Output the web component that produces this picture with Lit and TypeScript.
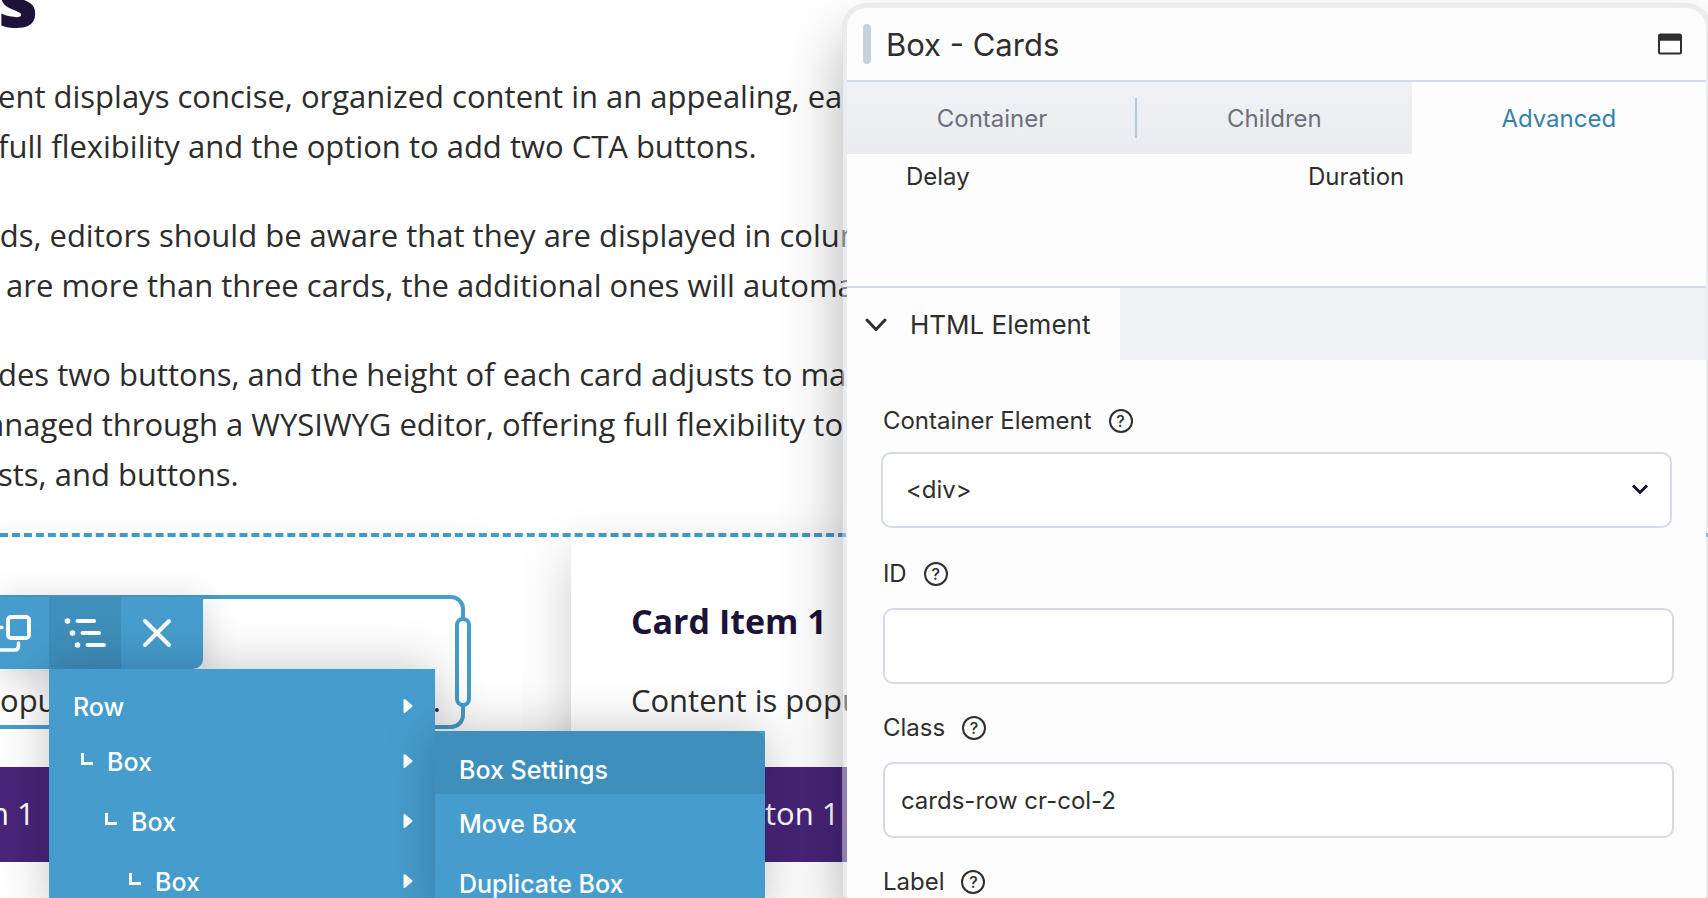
import { LitElement, html, css } from "lit";
import { customElement, state } from "lit/decorators.js";
import { classMap } from "lit/directives/class-map.js";

interface Line {
  text: string;
  cut?: boolean;
}

const PARAGRAPHS: Line[][] = [
  [
    { text: "ent displays concise, organized content in an appealing, ea" },
    { text: "full flexibility and the option to add two CTA buttons." },
  ],
  [
    { text: "rds, editors should be aware that they are displayed in colum", cut: true },
    { text: " are more than three cards, the additional ones will automa" },
  ],
  [
    { text: "des two buttons, and the height of each card adjusts to ma" },
    { text: "anaged through a WYSIWYG editor, offering full flexibility to", cut: true },
    { text: "sts, and buttons." },
  ],
];

const OUTLINE = [
  { label: "Row", depth: 0 },
  { label: "Box", depth: 1 },
  { label: "Box", depth: 2 },
  { label: "Box", depth: 3 },
];

const ACTIONS = ["Box Settings", "Move Box", "Duplicate Box"];

/* Toolbar attached to the selected box, with its outline menu and submenu. */
@customElement("box-toolbar")
export class BoxToolbar extends LitElement {
  static styles = css`
    :host {
      display: block;
      font-family: Inter, "Liberation Sans", sans-serif;
      --blue: #469dcd;
      --blue-dark: #3e8fbb;
    }
    button {
      border: 0;
      margin: 0;
      padding: 0;
      background: transparent;
      color: #fff;
      font: inherit;
    }
    svg {
      display: block;
      fill: none;
      stroke: #fff;
      stroke-linecap: round;
      stroke-linejoin: round;
    }
    .bar {
      display: flex;
      width: max-content;
      height: 72px;
      background: var(--blue);
      border-bottom-right-radius: 10px;
      box-shadow: 0 6px 36px rgba(0, 0, 20, 0.2);
    }
    .copy {
      width: 49px;
    }
    .tree {
      width: 72px;
      background: var(--blue-dark);
    }
    .close {
      width: 82px;
    }
    .menu,
    .submenu {
      position: absolute;
      background: var(--blue);
      font-size: 25px;
      font-weight: 500;
      line-height: 32px;
      box-shadow: 0 0 48px rgba(0, 0, 20, 0.24);
    }
    .menu {
      left: 49px;
      top: 72px;
      width: 386px;
    }
    .submenu {
      left: 386px;
      top: 62px;
      width: 330px;
    }
    .item {
      box-sizing: border-box;
      display: flex;
      align-items: center;
      width: 100%;
      height: 60px;
      padding: 0 22px 0 24px;
      text-align: left;
    }
    .item:first-child {
      height: 63px;
      padding-top: 12px;
    }
    .submenu .item:first-child {
      padding-top: 14px;
      background: var(--blue-dark);
      border-top-right-radius: 10px;
    }
    .depth-1 {
      padding-left: 32px;
    }
    .depth-2 {
      padding-left: 56px;
    }
    .depth-3 {
      padding-left: 80px;
    }
    .branch {
      margin: 0 14px 6px 0;
      stroke-linecap: butt;
      stroke-linejoin: miter;
    }
    .label {
      flex: 1;
    }
    .arrow {
      fill: #fff;
      margin-bottom: 2px;
    }
  `;

  render() {
    return html`
      <div class="bar">
        <button class="copy" aria-label="Duplicate">
          <svg width="49" height="72" viewBox="0 0 49 72" stroke-width="4">
            <rect x="8" y="20" width="21" height="21" rx="3" />
            <path d="M-4 30.500H2M18.500 46v3q0 4-4 4H-4" stroke-width="3.500" />
          </svg>
        </button>
        <button class="tree" aria-label="Outline">
          <svg width="72" height="72" viewBox="0 0 72 72" stroke-width="4">
            <path d="M28.500 24h16.500M33.500 36h16.500M38.500 48h16.500" />
            <g fill="#fff" stroke="none">
              <circle cx="18.500" cy="24" r="2.800" />
              <circle cx="23.500" cy="36" r="2.800" />
              <circle cx="28.500" cy="48" r="2.800" />
            </g>
          </svg>
        </button>
        <button class="close" aria-label="Close">
          <svg width="82" height="72" viewBox="0 0 82 72" stroke-width="4">
            <path d="M24 24l24 24M48 24L24 48" />
          </svg>
        </button>
      </div>
      <div class="menu">
        ${OUTLINE.map(
          (o) => html`<button class="item depth-${o.depth}">
            ${o.depth
              ? html`<svg class="branch" width="12" height="12" viewBox="0 0 12 12" stroke-width="3">
                  <path d="M1.500 0v10.500H12" />
                </svg>`
              : null}
            <span class="label">${o.label}</span>
            <svg class="arrow" width="10" height="16" viewBox="0 0 10 16" stroke-width="2">
              <path d="M1.500 2l7 6-7 6z" />
            </svg>
          </button>`
        )}
        <div class="submenu">
          ${ACTIONS.map((a) => html`<button class="item"><span class="label">${a}</span></button>`)}
        </div>
      </div>
    `;
  }
}

/* Floating settings panel. */
@customElement("settings-panel")
export class SettingsPanel extends LitElement {
  @state() private tab = "Advanced";

  static styles = css`
    :host {
      display: block;
      box-sizing: border-box;
      border: 5px solid rgba(216, 218, 224, 0.5);
      border-bottom: 0;
      border-radius: 25px 25px 0 0;
      background: #fdfdfe;
      background-clip: padding-box;
      box-shadow: 0 34px 60px rgba(0, 0, 10, 0.3);
      color: #2e2e2e;
      font: 24px/30px Inter, "Liberation Sans", sans-serif;
      overflow: hidden;
    }
    button {
      border: 0;
      margin: 0;
      padding: 0;
      background: transparent;
      color: inherit;
      font: inherit;
    }
    svg {
      display: block;
      fill: none;
      stroke: currentColor;
    }
    .head {
      display: flex;
      align-items: center;
      height: 72px;
      padding: 0 24px 0 16px;
      border-bottom: 2px solid #d3dce6;
    }
    .grip {
      width: 8px;
      height: 40px;
      border-radius: 4px;
      background: #c6d1da;
    }
    h2 {
      flex: 1;
      margin: 2px 0 0 15px;
      font-size: 31px;
      line-height: 40px;
      font-weight: 400;
    }
    .tabs {
      display: flex;
      height: 72px;
      background: linear-gradient(#f0f1f5, #ebecf0);
    }
    .tab {
      position: relative;
      flex: 1 1 auto;
      padding-top: 2px;
      color: #6c7079;
    }
    .tab:first-child::after {
      content: "";
      position: absolute;
      right: 0;
      top: 16px;
      width: 2px;
      height: 40px;
      background: #b5c9d8;
    }
    .tab.active {
      background: #fdfdfe;
      color: #3681ab;
    }
    .timing {
      display: grid;
      grid-template-columns: 1fr 1fr;
      column-gap: 4px;
      height: 124px;
      padding: 8px 0 0 59px;
      border-bottom: 2px solid #d3dce6;
    }
    .section {
      display: flex;
      height: 72px;
      background: #eff0f4;
    }
    .section button {
      display: flex;
      align-items: center;
      gap: 23px;
      padding: 2px 30px 0 18px;
      background: #fdfdfe;
      font-size: 26px;
    }
    .fields {
      padding: 46px 32px 0 34px;
    }
    .row {
      display: flex;
      align-items: center;
      gap: 17px;
      padding-left: 2px;
    }
    .help {
      box-sizing: border-box;
      width: 24px;
      height: 24px;
      border: 2px solid #2e2e2e;
      border-radius: 50%;
      font-size: 16px;
      line-height: 20px;
      font-weight: 500;
      text-align: center;
    }
    .control {
      position: relative;
      margin: 19px 0 29px 2px;
    }
    .control.pick {
      margin: 16px 2px 31px 0;
    }
    input,
    select {
      display: block;
      box-sizing: border-box;
      width: 100%;
      height: 76px;
      margin: 0;
      padding: 0 16px;
      appearance: none;
      border: 2px solid #d3dce6;
      border-radius: 10px;
      background: #fff;
      color: inherit;
      font: inherit;
      outline: 0;
    }
    select {
      padding: 0 23px;
    }
    .caret {
      position: absolute;
      right: 23px;
      top: 32px;
      color: #1d1238;
      pointer-events: none;
    }
  `;

  private label(id: string, text: string) {
    return html`<div class="row">
      <label for=${id}>${text}</label>
      <button class="help" type="button" aria-label="Help for ${text}">?</button>
    </div>`;
  }

  render() {
    return html`
      <header class="head">
        <span class="grip"></span>
        <h2>Box - Cards</h2>
        <button aria-label="Window mode">
          <svg width="24" height="22" viewBox="0 0 24 22" stroke-width="2">
            <rect x="1" y="1.500" width="22" height="19" rx="1.500" />
            <path d="M1 4.500h22" stroke-width="6.500" />
          </svg>
        </button>
      </header>
      <nav class="tabs" role="tablist">
        ${["Container", "Children", "Advanced"].map(
          (t) => html`<button
            role="tab"
            class=${classMap({ tab: true, active: t === this.tab })}
            aria-selected=${t === this.tab}
            @click=${() => (this.tab = t)}
          >
            ${t}
          </button>`
        )}
      </nav>
      <div class="timing"><span>Delay</span><span>Duration</span></div>
      <div class="section">
        <button aria-expanded="true">
          <svg width="22" height="14" viewBox="0 0 22 14" stroke-width="3" stroke-linecap="round" stroke-linejoin="round">
            <path d="M2 2l9 9.500 9-9.500" />
          </svg>
          HTML Element
        </button>
      </div>
      <form class="fields">
        ${this.label("element", "Container Element")}
        <div class="control pick">
          <select id="element"><option>&lt;div&gt;</option></select>
          <svg class="caret" width="18" height="12" viewBox="0 0 18 12" stroke-width="3">
            <path d="M2 1.500l7 7 7-7" />
          </svg>
        </div>
        ${this.label("id", "ID")}
        <div class="control"><input id="id" type="text" /></div>
        ${this.label("class", "Class")}
        <div class="control"><input id="class" type="text" value="cards-row cr-col-2" /></div>
        ${this.label("label", "Label")}
      </form>
    `;
  }
}

@customElement("app-root")
export class AppRoot extends LitElement {
  static styles = css`
    :host {
      display: block;
      position: relative;
      height: 100vh;
      overflow: hidden;
      background: #fff;
      color: #2c2c2c;
      font: 31px/50px "Open Sans", "Noto Sans", sans-serif;
    }
    .page {
      margin-top: -43px;
    }
    h1 {
      margin: 0 0 34px -2px;
      color: #1d1238;
      font-size: 78px;
      line-height: 80px;
      font-weight: 800;
    }
    p {
      margin: 0 0 39px;
    }
    .copy p:last-child {
      margin-bottom: 34px;
    }
    .line {
      display: block;
      margin-left: -2px;
      white-space: pre;
    }
    .line.cut {
      margin-left: -13px;
    }
    .cards {
      display: grid;
      grid-template-columns: 63fr 137fr;
      column-gap: 48px;
      border-top: 4px dashed #469dcd;
    }
    .card {
      position: relative;
      background: #fff;
      box-shadow: 0 16px 48px rgba(0, 0, 10, 0.2);
    }
    .card.first {
      z-index: 1;
      padding: 58px 58px 60px 0;
      box-shadow: -30px 14px 40px rgba(0, 0, 10, 0.12);
    }
    .card.second {
      padding: 60px;
    }
    .selected {
      position: relative;
      display: flex;
      align-items: flex-end;
      justify-content: space-between;
      height: 126px;
      padding-right: 20px;
      border: 4px solid #469dcd;
      border-left: 0;
      border-radius: 0 14px 14px 0;
    }
    .handle {
      position: absolute;
      right: -10px;
      top: 18px;
      box-sizing: border-box;
      width: 16px;
      height: 90px;
      border: 4px solid #469dcd;
      border-radius: 8px;
      background: #fff;
    }
    box-toolbar {
      position: absolute;
      left: 0;
      top: -2px;
    }
    h3 {
      margin: 0 0 30px;
      color: #1d1238;
      font-size: 34px;
      line-height: 48px;
      font-weight: 700;
    }
    .card p {
      margin: 0 0 42px;
    }
    .cta {
      display: block;
      width: max-content;
      padding: 0 84px 2px;
      background: #482578;
      color: #fff;
      line-height: 93px;
      text-decoration: none;
    }
    .first .cta {
      margin: 38px 0 0;
      padding-left: 0;
      text-indent: -10px;
    }
    settings-panel {
      position: absolute;
      z-index: 2;
      top: 3px;
      right: -3px;
      bottom: 0;
      width: calc(51% - 2px);
    }
  `;

  render() {
    return html`
      <main class="page">
        <h1>s</h1>
        <div class="copy">
          ${PARAGRAPHS.map(
            (p) => html`<p>
              ${p.map((l) => html`<span class=${classMap({ line: true, cut: !!l.cut })}>${l.text}</span>`)}
            </p>`
          )}
        </div>
        <div class="cards">
          <article class="card first">
            <div class="selected">
              <span>opu</span><span>.</span>
              <span class="handle"></span>
              <box-toolbar></box-toolbar>
            </div>
            <a class="cta" href="#">n 1</a>
          </article>
          <article class="card second">
            <h3>Card Item 1</h3>
            <p>Content is popu</p>
            <a class="cta" href="#">Button 1</a>
          </article>
        </div>
      </main>
      <settings-panel></settings-panel>
    `;
  }
}
